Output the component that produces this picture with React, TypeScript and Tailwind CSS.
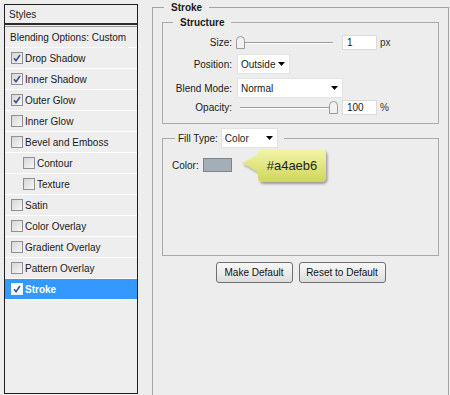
import React from "react";

function Check({ checked, sel }: { checked: boolean; sel?: boolean }) {
  return (
    <span
      className={`w-[12px] h-[12px] shrink-0 border flex items-center justify-center ${
        sel ? "border-[#e8f0ff] bg-white" : "border-[#8f9090] bg-gradient-to-br from-[#d6d6d6] to-[#f7f7f7]"
      }`}
    >
      {checked && (
        <svg width="8" height="8" viewBox="0 0 8 8">
          <path d="M1 4.2 L3 6.6 L7 1" stroke="#3f4f93" strokeWidth="1.6" fill="none" />
        </svg>
      )}
    </span>
  );
}

const items: { label: string; checked: boolean; indent?: boolean; sel?: boolean }[] = [
  { label: "Drop Shadow", checked: true },
  { label: "Inner Shadow", checked: true },
  { label: "Outer Glow", checked: true },
  { label: "Inner Glow", checked: false },
  { label: "Bevel and Emboss", checked: false },
  { label: "Contour", checked: false, indent: true },
  { label: "Texture", checked: false, indent: true },
  { label: "Satin", checked: false },
  { label: "Color Overlay", checked: false },
  { label: "Gradient Overlay", checked: false },
  { label: "Pattern Overlay", checked: false },
  { label: "Stroke", checked: true, sel: true },
];

function Thumb() {
  return (
    <svg width="9" height="13" viewBox="0 0 9 13">
      <path
        d="M0.5 12.5 V4.5 Q0.5 0.5 4.5 0.5 Q8.5 0.5 8.5 4.5 V12.5 Z"
        fill="#f2f2f2"
        stroke="#9a9a9a"
      />
    </svg>
  );
}

function Slider({ pos }: { pos: number }) {
  return (
    <div className="relative w-[96px] h-[16px]">
      <div className="absolute left-[3px] right-0 top-[8px] h-[1px] bg-[#9a9a9a]" />
      <div className="absolute left-[3px] right-0 top-[9px] h-[1px] bg-white" />
      <div className="absolute top-[2px]" style={{ left: pos }}>
        <Thumb />
      </div>
    </div>
  );
}

function Select({ w, value }: { w: string; value: string }) {
  return (
    <div className={`${w} h-[20px] bg-white border border-[#e2e2e2] flex items-center justify-between pl-[3px] pr-[4px]`}>
      <span>{value}</span>
      <svg width="7" height="4" viewBox="0 0 7 4">
        <path d="M0 0 H7 L3.5 4 Z" fill="#000" />
      </svg>
    </div>
  );
}

export default function App() {
  return (
    <div className="w-[450px] h-[395px] overflow-hidden bg-[#ededed] flex items-start font-['Liberation_Sans',Arial,sans-serif] text-[10px] text-[#1a1a1a]">
      {/* Left panel */}
      <div className="ml-[4px] mt-[4px] w-[134px] h-[390px] border border-[#1e1e1e] bg-[#eeeeee] flex flex-col">
        <div className="h-[20px] flex items-center pl-[4px] border-b-2 border-[#2a2a2a] shrink-0">Styles</div>
        <div className="mt-[1px] h-[22px] flex items-center pl-[5px] border-t border-[#9a9a9a] border-b border-b-white shrink-0">
          Blending Options: Custom
        </div>
        {items.map((it) => (
          <div
            key={it.label}
            className={`h-[21px] shrink-0 border-b border-white flex items-center ${
              it.indent ? "pl-[18px]" : "pl-[6px]"
            } ${it.sel ? "bg-[#3399ff] text-white font-bold" : ""}`}
          >
            <Check checked={it.checked} sel={it.sel} />
            <span className="ml-[2px]">{it.label}</span>
          </div>
        ))}
      </div>

      {/* Right panel */}
      <fieldset className="ml-[14px] mt-[1px] w-[297px] h-[400px] border border-[#a3a3a3]">
        <legend className="ml-[11px] px-[7px] font-bold leading-[13px]">Stroke</legend>
        <div className="pl-[9px] pr-[9px] pt-[2px] flex flex-col">
          <fieldset className="h-[108px] border border-[#a9a9a9]">
            <legend className="ml-[10px] px-[7px] font-bold leading-[13px]">Structure</legend>
            <div className="flex flex-col">
              <div className="mt-[3px] h-[20px] flex items-center">
                <span className="w-[69px] text-right">Size:</span>
                <div className="ml-[5px]">
                  <Slider pos={-1} />
                </div>
                <div className="ml-[9px] w-[35px] h-[15px] bg-white border border-[#dadada] flex items-center pl-[4px]">1</div>
                <span className="ml-[3px] text-[#333]">px</span>
              </div>
              <div className="mt-[2px] h-[20px] flex items-center">
                <span className="w-[69px] text-right">Position:</span>
                <div className="ml-[5px]">
                  <Select w="w-[53px]" value="Outside" />
                </div>
              </div>
              <div className="mt-[4px] h-[20px] flex items-center">
                <span className="w-[69px] text-right">Blend Mode:</span>
                <div className="ml-[5px]">
                  <Select w="w-[106px]" value="Normal" />
                </div>
              </div>
              <div className="mt-[1px] h-[16px] flex items-center">
                <span className="w-[69px] text-right">Opacity:</span>
                <div className="ml-[5px]">
                  <Slider pos={92} />
                </div>
                <div className="ml-[9px] w-[35px] h-[15px] bg-white border border-[#dadada] flex items-center pl-[4px]">100</div>
                <span className="ml-[3px] text-[#333]">%</span>
              </div>
            </div>
          </fieldset>

          <fieldset className="mt-[4px] h-[128px] border border-[#a9a9a9]">
            <legend className="ml-[12px] pl-[3px] pr-[6px]">
              <div className="flex items-center">
                <span>Fill Type:</span>
                <div className="ml-[3px]">
                  <Select w="w-[57px]" value="Color" />
                </div>
              </div>
            </legend>
            <div className="relative mt-[10px] h-[14px] flex items-center pl-[9px]">
              <span>Color:</span>
              <div className="ml-[4px] w-[29px] h-[14px] bg-[#a4aeb6] border border-[#7d848a]" />
              <div className="absolute left-[77px] top-[-11px] w-[92px] h-[42px]">
                <svg className="absolute inset-0" width="92" height="42" viewBox="0 0 92 42">
                  <defs>
                    <linearGradient id="cg" x1="0" y1="0" x2="0" y2="1">
                      <stop offset="0" stopColor="#f3f5a9" />
                      <stop offset="1" stopColor="#cfd65c" />
                    </linearGradient>
                    <filter id="sh" x="-10%" y="-10%" width="130%" height="140%">
                      <feDropShadow dx="1.5" dy="2" stdDeviation="1.2" floodColor="#000" floodOpacity="0.35" />
                    </filter>
                  </defs>
                  <path
                    d="M23 2 H81 Q86 2 86 7 V30 Q86 35 81 35 H23 Q18 35 18 30 V25 Q10 20 2 16 Q10 12 18 7 Q18 2 23 2 Z"
                    fill="url(#cg)"
                    filter="url(#sh)"
                  />
                </svg>
                <div className="absolute left-[18px] top-[2px] w-[68px] h-[33px] flex items-center justify-center text-[13px] text-[#1f1f1f]">
                  #a4aeb6
                </div>
              </div>
            </div>
          </fieldset>

          <div className="mt-[6px] flex justify-center gap-[6px]">
            <button className="w-[77px] h-[21px] rounded-[3px] border border-[#707070] bg-gradient-to-b from-[#f7f7f7] via-[#ececec] to-[#dcdcdc] text-[10px] text-[#111]">
              Make Default
            </button>
            <button className="w-[87px] h-[21px] rounded-[3px] border border-[#707070] bg-gradient-to-b from-[#f7f7f7] via-[#ececec] to-[#dcdcdc] text-[10px] text-[#111]">
              Reset to Default
            </button>
          </div>
        </div>
      </fieldset>
    </div>
  );
}
